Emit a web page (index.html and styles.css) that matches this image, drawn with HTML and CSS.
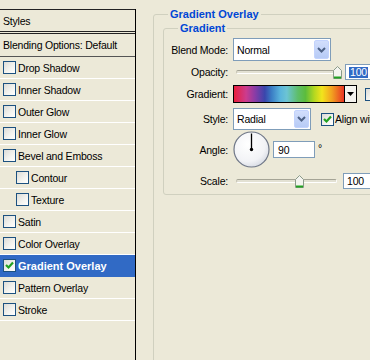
FILE: index.html
```html
<!DOCTYPE html>
<html>
<head>
<meta charset="utf-8">
<link rel="stylesheet" href="styles.css">
</head>
<body>
<div class="dialog">
  <div class="styles-list">
    <div class="head styles-head">Styles</div>
    <div class="head blend-head">Blending Options: Default</div>
    <ul class="fx">
      <li><span class="cb"></span>Drop Shadow</li>
      <li><span class="cb"></span>Inner Shadow</li>
      <li><span class="cb"></span>Outer Glow</li>
      <li><span class="cb"></span>Inner Glow</li>
      <li><span class="cb"></span>Bevel and Emboss</li>
      <li class="sub"><span class="cb"></span>Contour</li>
      <li class="sub"><span class="cb"></span>Texture</li>
      <li><span class="cb"></span>Satin</li>
      <li><span class="cb"></span>Color Overlay</li>
      <li class="sel"><span class="cb"><svg width="11" height="11" viewBox="0 0 11 11"><path d="M2 5 L4.5 7.5 L9 2.5" fill="none" stroke="#21a121" stroke-width="2.2"/></svg></span>Gradient Overlay</li>
      <li><span class="cb"></span>Pattern Overlay</li>
      <li><span class="cb"></span>Stroke</li>
    </ul>
  </div>
  <div class="panel">
    <div class="group outer">
      <div class="gtitle">Gradient Overlay</div>
      <div class="group inner">
        <div class="gtitle">Gradient</div>

        <div class="row r-blend">
          <span class="lbl">Blend Mode:</span>
          <div class="select sel-blend">
            <span class="val">Normal</span>
            <span class="drop"><svg width="9" height="6" viewBox="0 0 9 6"><path d="M1 1 L4.5 4.5 L8 1" fill="none" stroke="#4d6185" stroke-width="2"/></svg></span>
          </div>
        </div>

        <div class="row r-opacity">
          <span class="lbl">Opacity:</span>
          <div class="slider sl-opacity">
            <div class="track"></div>
            <span class="thumb th-opacity"><svg width="9" height="13" viewBox="0 0 9 13"><path d="M4.5 0.5 L8.5 4.5 L8.5 12.5 L0.5 12.5 L0.5 4.5 Z" fill="#f4f4ef" stroke="#8a9a8a"/><rect x="1" y="10.5" width="7" height="2" fill="#21a121"/></svg></span>
          </div>
          <div class="input in-opacity"><span class="hl">100</span></div>
        </div>

        <div class="row r-gradient">
          <span class="lbl">Gradient:</span>
          <div class="grad"></div>
          <div class="grad-drop"><svg width="7" height="4" viewBox="0 0 7 4"><path d="M0 0 L7 0 L3.5 4 Z" fill="#000"/></svg></div>
          <span class="cb reverse"></span>
        </div>

        <div class="row r-style">
          <span class="lbl">Style:</span>
          <div class="select sel-style">
            <span class="val">Radial</span>
            <span class="drop"><svg width="9" height="6" viewBox="0 0 9 6"><path d="M1 1 L4.5 4.5 L8 1" fill="none" stroke="#4d6185" stroke-width="2"/></svg></span>
          </div>
          <span class="cb align-cb"><svg width="11" height="11" viewBox="0 0 11 11"><path d="M2 5 L4.5 7.5 L9 2.5" fill="none" stroke="#21a121" stroke-width="2.2"/></svg></span>
          <span class="align-lbl">Align with Layer</span>
        </div>

        <div class="row r-angle">
          <span class="lbl">Angle:</span>
          <svg class="dial" width="37" height="37" viewBox="0 0 37 37">
            <defs>
              <radialGradient id="dg" cx="0.4" cy="0.35" r="0.7">
                <stop offset="0" stop-color="#ffffff"/>
                <stop offset="0.7" stop-color="#f2f3f6"/>
                <stop offset="1" stop-color="#d6dae3"/>
              </radialGradient>
            </defs>
            <circle cx="18.5" cy="18.5" r="17.5" fill="url(#dg)" stroke="#6f7787" stroke-width="1.2"/>
            <line x1="18.5" y1="18.5" x2="18.5" y2="2.5" stroke="#000" stroke-width="1.3"/>
            <circle cx="18.5" cy="18.5" r="1.7" fill="#000"/>
          </svg>
          <div class="input in-angle">90</div>
          <span class="deg">°</span>
        </div>

        <div class="row r-scale">
          <span class="lbl">Scale:</span>
          <div class="slider sl-scale">
            <div class="track"></div>
            <span class="thumb th-scale"><svg width="9" height="13" viewBox="0 0 9 13"><path d="M4.5 0.5 L8.5 4.5 L8.5 12.5 L0.5 12.5 L0.5 4.5 Z" fill="#f4f4ef" stroke="#8a9a8a"/><rect x="1" y="10.5" width="7" height="2" fill="#21a121"/></svg></span>
          </div>
          <div class="input in-scale">100</div>
        </div>
      </div>
    </div>
  </div>
</div>
</body>
</html>
```

FILE: styles.css
```css
html, body {
  margin: 0;
  padding: 0;
  background: #ece9d8;
  overflow: hidden;
}
body {
  width: 370px;
  height: 360px;
  font-family: "Liberation Sans", Arial, sans-serif;
  font-size: 10.5px;
  letter-spacing: -0.2px;
  color: #000;
}
.dialog {
  display: flex;
  height: 360px;
}

/* left list */
.styles-list {
  flex: none;
  width: 135px;
  margin-top: 9px;
  border-right: 1px solid #000;
}
.head {
  display: flex;
  align-items: center;
  padding-left: 3px;
  border-top: 1px solid #222;
  border-bottom: 1px solid #222;
}
.styles-head {
  height: 21px;
}
.blend-head {
  height: 22px;
  margin-top: 1px;
  border-bottom-color: #555;
}
.fx {
  list-style: none;
  margin: 0;
  padding: 0;
}
.fx li {
  display: flex;
  align-items: center;
  height: 21px;
  padding-left: 3px;
  border-bottom: 1px solid #fff;
}
.fx li.sub {
  padding-left: 16px;
}
.fx li.sel {
  background: #316ac5;
  color: #fff;
  font-weight: bold;
  font-size: 11px;
  letter-spacing: 0;
  border-bottom-color: #316ac5;
}
.cb {
  flex: none;
  box-sizing: border-box;
  width: 13px;
  height: 13px;
  margin-right: 2px;
  border: 1px solid #1c5180;
  background: linear-gradient(135deg, #dcdcd7 0%, #f4f4f0 60%, #ffffff 100%);
  display: flex;
  align-items: center;
  justify-content: center;
}

/* right panel */
.panel {
  flex: none;
  width: 260px;
  margin-left: 17px;
  margin-top: 14px;
}
.group {
  border: 1px solid #d0d0bf;
  border-radius: 3px;
}
.outer {
  height: 400px;
}
.inner {
  margin: 7px 0 0 9px;
  padding-bottom: 5px;
}
.gtitle {
  width: max-content;
  height: 13px;
  line-height: 13px;
  margin: -7px 0 0 14px;
  padding: 0 2px;
  background: #ece9d8;
  color: #0046d5;
  font-weight: bold;
  font-size: 11px;
  letter-spacing: 0;
}
.row {
  display: flex;
  align-items: center;
}
.lbl {
  flex: none;
  width: 64px;
  margin-right: 5px;
  text-align: right;
}
.r-blend { height: 23px; margin-top: 3px; }
.r-opacity { height: 16px; margin-top: 3px; }
.r-gradient { height: 18px; margin-top: 5px; }
.r-style { height: 22px; margin-top: 5px; }
.r-angle { height: 37px; margin-top: 1px; }
.r-scale { height: 16px; margin-top: 5px; }

.select {
  box-sizing: border-box;
  display: flex;
  align-self: stretch;
  padding: 1px;
  border: 1px solid #7f9db9;
  background: #fff;
}
.sel-blend { width: 98px; }
.sel-style { width: 78px; }
.val {
  flex: 1;
  display: flex;
  align-items: center;
  padding-left: 2px;
}
.drop {
  width: 15px;
  display: flex;
  align-items: center;
  justify-content: center;
  border-radius: 2px;
  background: linear-gradient(#d2defc, #b7cbf6);
  border: 1px solid #c3d3fd;
  box-sizing: border-box;
}

.slider {
  position: relative;
  margin-left: 3px;
  height: 16px;
  display: flex;
  align-items: center;
}
.sl-opacity { width: 104px; }
.sl-scale { width: 101px; }
.track {
  box-sizing: border-box;
  width: 100%;
  height: 4px;
  border-radius: 2px;
  border-top: 1px solid #a5a496;
  border-left: 1px solid #c4c2b4;
  border-bottom: 1px solid #fff;
  border-right: 1px solid #fff;
  background: #e3e1d3;
}
.thumb {
  position: absolute;
  top: 2px;
  width: 9px;
  height: 13px;
  display: block;
}
.thumb svg { display: block; }
.th-opacity { left: 97px; }
.th-scale { left: 59px; }

.input {
  box-sizing: border-box;
  height: 16px;
  width: 40px;
  border: 1px solid #7f9db9;
  background: #fff;
  padding-left: 3px;
  display: flex;
  align-items: center;
}
.in-opacity { margin-left: 5px; }
.in-scale { margin-left: 6px; }
.hl {
  background: #316ac5;
  color: #fff;
  padding: 0 1px;
  line-height: 11px;
}

.grad {
  box-sizing: border-box;
  width: 112px;
  height: 18px;
  border: 1px solid #000;
  background: linear-gradient(to right, #e8203c 0%, #cc3c8e 11%, #8a3ca6 19%, #3a46ac 28%, #3a7cc4 34%, #5ab4dc 42%, #6cc4d4 48%, #5ebe6a 58%, #5cbc3c 65%, #b4d820 73%, #f2e41c 80%, #f2a020 89%, #e83424 100%);
}
.grad-drop {
  box-sizing: border-box;
  width: 12px;
  height: 18px;
  border: 1px solid #000;
  border-left: none;
  background: #f4f3ee;
  display: flex;
  align-items: center;
  justify-content: center;
}
.reverse {
  margin-left: 8px;
}
.align-cb {
  margin-left: 10px;
  margin-right: 1px;
}

.dial {
  flex: none;
  display: block;
}
.in-angle {
  width: 42px;
  height: 17px;
  margin-left: 3px;
  padding-left: 4px;
}
.deg {
  margin-left: 3px;
  align-self: flex-start;
  margin-top: 11px;
}
```
